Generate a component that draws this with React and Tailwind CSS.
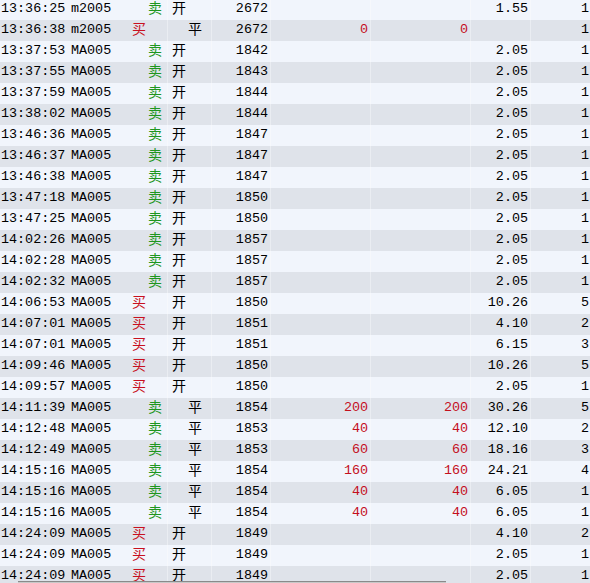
import React from 'react';

const rows = [
  ['13:36:25', 'm2005', '卖', '开', '2672', '', '', '1.55', '1'],
  ['13:36:38', 'm2005', '买', '平', '2672', '0', '0', '', '1'],
  ['13:37:53', 'MA005', '卖', '开', '1842', '', '', '2.05', '1'],
  ['13:37:55', 'MA005', '卖', '开', '1843', '', '', '2.05', '1'],
  ['13:37:59', 'MA005', '卖', '开', '1844', '', '', '2.05', '1'],
  ['13:38:02', 'MA005', '卖', '开', '1844', '', '', '2.05', '1'],
  ['13:46:36', 'MA005', '卖', '开', '1847', '', '', '2.05', '1'],
  ['13:46:37', 'MA005', '卖', '开', '1847', '', '', '2.05', '1'],
  ['13:46:38', 'MA005', '卖', '开', '1847', '', '', '2.05', '1'],
  ['13:47:18', 'MA005', '卖', '开', '1850', '', '', '2.05', '1'],
  ['13:47:25', 'MA005', '卖', '开', '1850', '', '', '2.05', '1'],
  ['14:02:26', 'MA005', '卖', '开', '1857', '', '', '2.05', '1'],
  ['14:02:28', 'MA005', '卖', '开', '1857', '', '', '2.05', '1'],
  ['14:02:32', 'MA005', '卖', '开', '1857', '', '', '2.05', '1'],
  ['14:06:53', 'MA005', '买', '开', '1850', '', '', '10.26', '5'],
  ['14:07:01', 'MA005', '买', '开', '1851', '', '', '4.10', '2'],
  ['14:07:01', 'MA005', '买', '开', '1851', '', '', '6.15', '3'],
  ['14:09:46', 'MA005', '买', '开', '1850', '', '', '10.26', '5'],
  ['14:09:57', 'MA005', '买', '开', '1850', '', '', '2.05', '1'],
  ['14:11:39', 'MA005', '卖', '平', '1854', '200', '200', '30.26', '5'],
  ['14:12:48', 'MA005', '卖', '平', '1853', '40', '40', '12.10', '2'],
  ['14:12:49', 'MA005', '卖', '平', '1853', '60', '60', '18.16', '3'],
  ['14:15:16', 'MA005', '卖', '平', '1854', '160', '160', '24.21', '4'],
  ['14:15:16', 'MA005', '卖', '平', '1854', '40', '40', '6.05', '1'],
  ['14:15:16', 'MA005', '卖', '平', '1854', '40', '40', '6.05', '1'],
  ['14:24:09', 'MA005', '买', '开', '1849', '', '', '4.10', '2'],
  ['14:24:09', 'MA005', '买', '开', '1849', '', '', '2.05', '1'],
  ['14:24:09', 'MA005', '买', '开', '1849', '', '', '2.05', '1'],
];

const mono = "font-['Liberation_Mono',monospace] text-[13.4px] leading-none pb-[1px]";
const cjk = "font-['Noto_Sans_CJK_SC',sans-serif] text-[14px] leading-none pb-[6px]";

const TradeRow = ({ r, i }) => {
  const [time, code, side, oc, price, pnl, pnl2, fee, qty] = r;
  const even = i % 2 === 0;
  const bg = even ? 'bg-[#f1f5fc]' : 'bg-[#dfe3ea]';
  const line = even ? 'border-[#f6f8fc]' : 'border-[#eaedf2]';
  const buy = side === '买';
  const open = oc === '开';
  const cell = `flex h-full items-center border-l ${line}`;

  return (
    <div className={`flex h-[21px] items-stretch whitespace-nowrap ${bg}`}>
      <div className={`flex w-[70px] items-center pl-[1px] ${mono}`}>{time}</div>
      <div className={`flex w-[61px] items-center pl-[1px] ${mono}`}>{code}</div>
      <div
        className={`flex w-[36px] items-center ${cjk} ${
          buy ? 'pl-[1px] text-[#c81020]' : 'pl-[17px] text-[#1e961e]'
        }`}
      >
        {side}
      </div>
      <div className={`${cell} w-[44px] ${cjk} ${open ? 'pl-[4px]' : 'pl-[20px]'}`}>{oc}</div>
      <div className={`${cell} w-[59px] justify-end pr-[2px] ${mono}`}>{price}</div>
      <div className={`${cell} w-[100px] justify-end pr-[2px] ${mono} text-[#c40f1d]`}>{pnl}</div>
      <div className={`${cell} w-[100px] justify-end pr-[2px] ${mono} text-[#c40f1d]`}>{pnl2}</div>
      <div className={`${cell} w-[60px] justify-end pr-[2px] ${mono}`}>{fee}</div>
      <div className={`${cell} w-[60px] justify-end pr-[1px] ${mono}`}>{qty}</div>
    </div>
  );
};

export default function App() {
  return (
    <div className="relative h-[583px] w-[590px] overflow-hidden bg-[#f1f5fc] text-black">
      <div className="-mt-[1px]">
        {rows.map((r, i) => (
          <TradeRow key={i} r={r} i={i} />
        ))}
      </div>
      {/* horizontal scrollbar thumb edge */}
      <div className="absolute bottom-0 left-[18px] h-[2px] w-[428px] border-t border-[#8a8a8a] bg-[#c8c8c8]" />
    </div>
  );
}
